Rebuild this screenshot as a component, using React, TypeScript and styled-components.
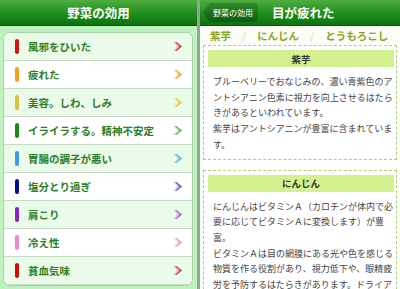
import styled, { createGlobalStyle } from 'styled-components';

const GlobalStyle = createGlobalStyle`
    body {
        margin: 0;
        font-family: "Noto Sans CJK JP", "Noto Sans", sans-serif;
    }
`;

const Page = styled.div`
    display: flex;
    width: 400px;
    height: 289px;
    overflow: hidden;
`;

const LeftPane = styled.div`
    width: 197px;
    flex-shrink: 0;
    background: #bdf1bd;
    border-right: 3px solid #8fa88f;
`;

const RightPane = styled.div`
    flex: 1;
    background: #fff;
    min-width: 0;
`;

const Header = styled.div`
    height: 25px;
    display: flex;
    align-items: center;
    background: linear-gradient(#4fae3f, #22901f 50%, #0c730f);
    border-bottom: 1px solid #0a560a;
    color: #fff;
    font-weight: bold;
    font-size: 12.5px;
`;

const LeftTitle = styled.div`
    flex: 1;
    text-align: center;
`;

const BackButton = styled.div`
    margin: 0 14px 0 3px;
    height: 19px;
    padding: 0 5px 0 10px;
    display: flex;
    align-items: center;
    font-size: 8px;
    font-weight: normal;
    background: linear-gradient(#2f8a2c, #0d5a10);
    clip-path: polygon(7px 0, 100% 0, 100% 100%, 7px 100%, 0 50%);
    border-radius: 0 4px 4px 0;
`;

const List = styled.div`
    margin: 6px 4px 0 3px;
    background: #fff;
    border: 1px solid #a9d4a9;
    border-radius: 7px;
    overflow: hidden;
`;

const Row = styled.div<{ $alt: boolean }>`
    height: 27px;
    display: flex;
    align-items: center;
    padding: 0 10px 0 11px;
    border-bottom: 1px solid #c6dcc6;
    background: ${p => (p.$alt ? '#ebfbea' : '#fff')};
`;

const Bar = styled.span<{ $color: string }>`
    width: 4px;
    height: 15px;
    border-radius: 2px;
    background: ${p => p.$color};
`;

const RowLabel = styled.span`
    flex: 1;
    margin-left: 9px;
    font-size: 10.5px;
    font-weight: bold;
    color: #2e8024;
`;

const Tabs = styled.div`
    height: 18px;
    display: flex;
    align-items: center;
    gap: 11px;
    padding-left: 10px;
    background: #fbfdf4;
    font-size: 10.5px;
    font-weight: bold;
    color: #88a31f;
`;

const Slash = styled.span`
    color: #cfdcae;
    font-weight: normal;
`;

const Content = styled.div`
    padding: 1px 3px 0 3px;
`;

const Card = styled.div`
    border: 1px dashed #aad36a;
    padding: 4px 2px 4px 4px;
    margin-bottom: 10px;
`;

const CardTitle = styled.div`
    height: 17px;
    display: flex;
    align-items: center;
    justify-content: center;
    background: #d3f18f;
    font-size: 9.5px;
    font-weight: bold;
    color: #333;
`;

const CardText = styled.div`
    padding: 7px 0 2px 5px;
    font-size: 9px;
    line-height: 15.7px;
    color: #444;
`;

function Chevron({ color }: { color: string }) {
    const id = 'g' + color.replace('#', '');
    return (
        <svg width="10" height="9" viewBox="0 0 10 9">
            <defs>
                <linearGradient id={id} x1="0" y1="0" x2="1" y2="0">
                    <stop offset="0" stopColor="#fff" stopOpacity="0.5" />
                    <stop offset="1" stopColor={color} />
                </linearGradient>
            </defs>
            <path d="M0 0 H4.5 L10 4.5 L4.5 9 H0 L5.5 4.5 Z" fill={`url(#${id})`} />
            <path d="M2.5 0 H4.5 L10 4.5 L4.5 9 H2.5 L8 4.5 Z" fill={color} />
        </svg>
    );
}

const items = [
    { label: '風邪をひいた', color: '#d81010', arrow: '#d04848' },
    { label: '疲れた', color: '#f0a020', arrow: '#e6b040' },
    { label: '美容。しわ、しみ', color: '#d6c440', arrow: '#e0cc30' },
    { label: 'イライラする。精神不安定', color: '#1a8a1a', arrow: '#78ae78' },
    { label: '胃腸の調子が悪い', color: '#3a9aee', arrow: '#68b6d8' },
    { label: '塩分とり過ぎ', color: '#0a0a90', arrow: '#7868b6' },
    { label: '肩こり', color: '#8a22d0', arrow: '#ae6ec6' },
    { label: '冷え性', color: '#ee88cc', arrow: '#e6a0c6' },
    { label: '貧血気味', color: '#d80808', arrow: '#d04e4e' }
];

export default function App() {
    return (
        <Page>
            <GlobalStyle />
            <LeftPane>
                <Header>
                    <LeftTitle>野菜の効用</LeftTitle>
                </Header>
                <List>
                    {items.map((item, i) => (
                        <Row key={item.label} $alt={i % 2 === 0}>
                            <Bar $color={item.color} />
                            <RowLabel>{item.label}</RowLabel>
                            <Chevron color={item.arrow} />
                        </Row>
                    ))}
                </List>
            </LeftPane>

            <RightPane>
                <Header>
                    <BackButton>野菜の効用</BackButton>
                    目が疲れた
                </Header>
                <Tabs>
                    <span>紫芋</span>
                    <Slash>/</Slash>
                    <span>にんじん</span>
                    <Slash>/</Slash>
                    <span>とうもろこし</span>
                </Tabs>
                <Content>
                    <Card>
                        <CardTitle>紫芋</CardTitle>
                        <CardText>
                            ブルーベリーでおなじみの、濃い青紫色のアントシアニン色素に視力を向上させるはたらきがあるといわれています。
                            <br />
                            紫芋はアントシアニンが豊富に含まれています。
                        </CardText>
                    </Card>
                    <Card>
                        <CardTitle>にんじん</CardTitle>
                        <CardText>
                            にんじんはビタミンＡ（カロチンが体内で必要に応じてビタミンＡに変換します）が豊富。
                            <br />
                            ビタミンＡは目の網膜にある光や色を感じる物質を作る役割があり、視力低下や、眼精疲労を予防するはたらきがあります。ドライアイの改善にも役立ちます。
                        </CardText>
                    </Card>
                </Content>
            </RightPane>
        </Page>
    );
}
